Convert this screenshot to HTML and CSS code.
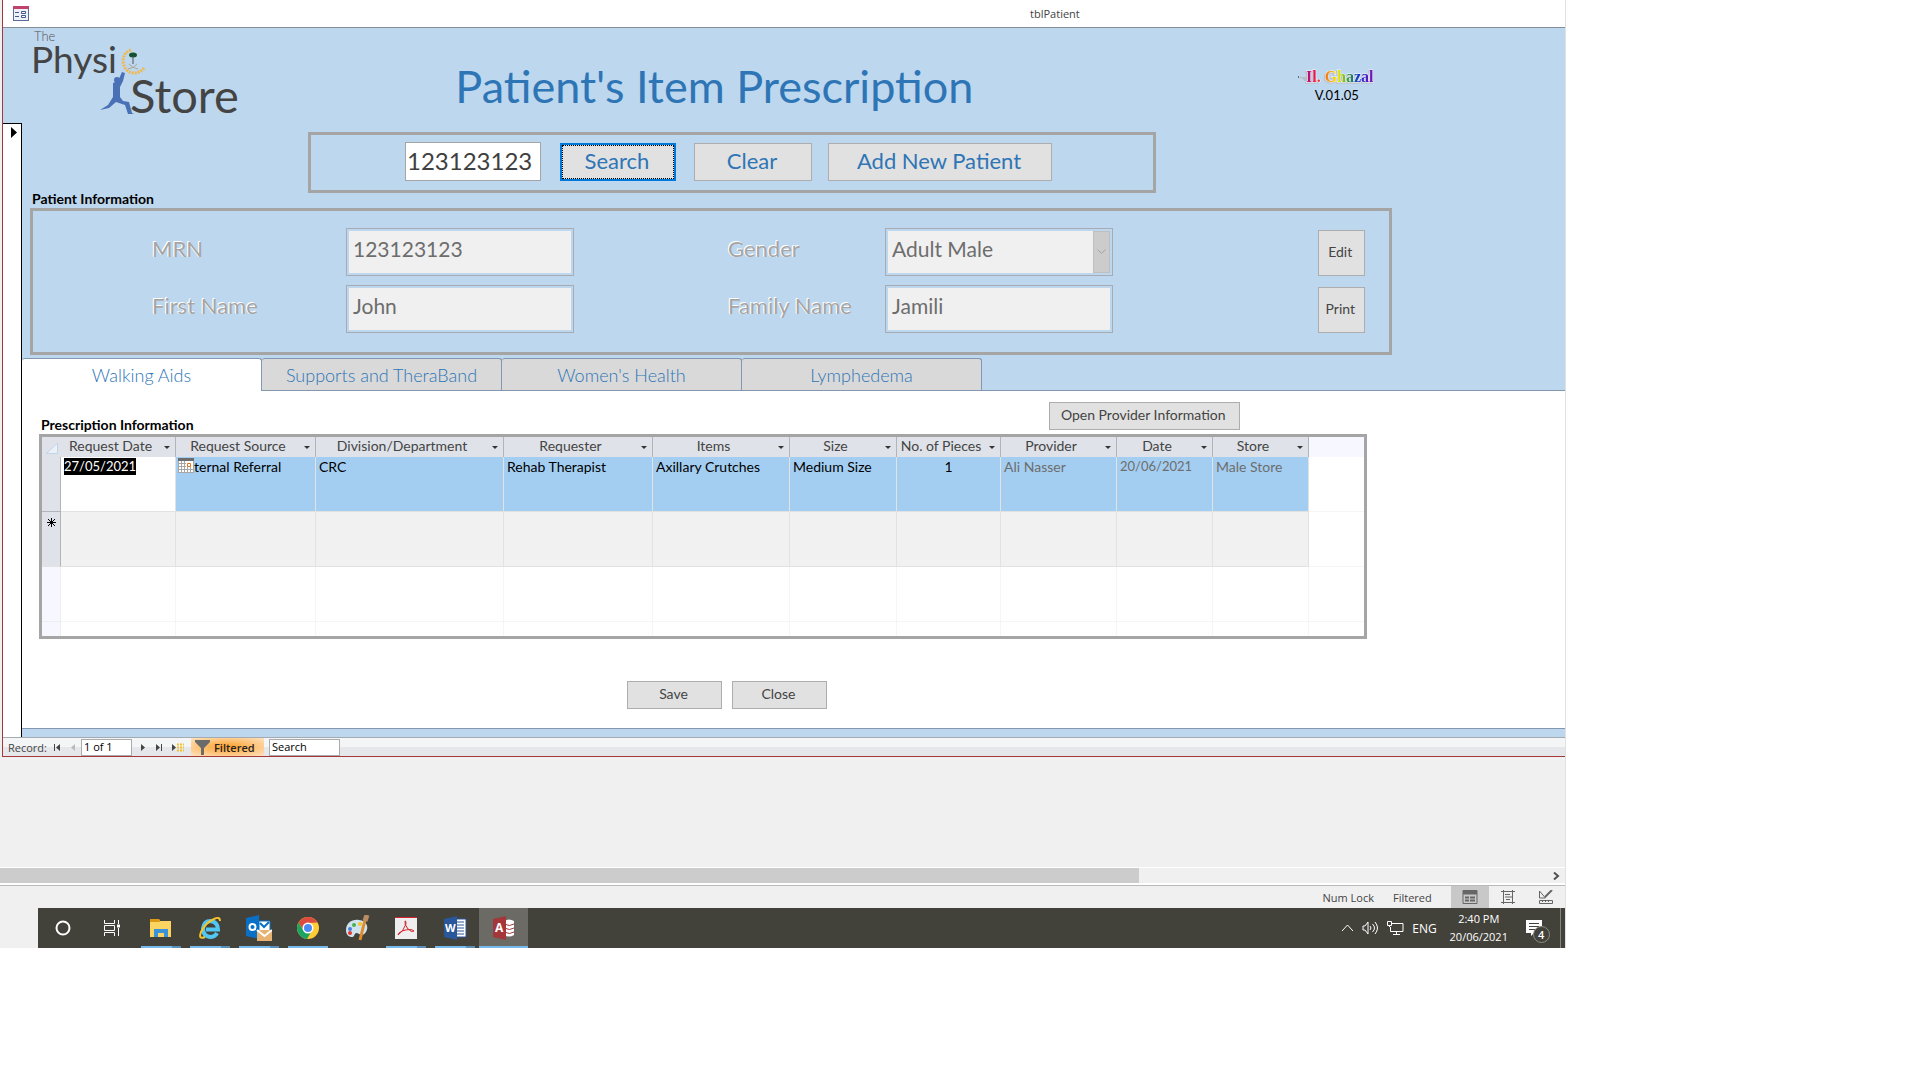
FILE: index.html
```html
<!DOCTYPE html>
<html lang="en">
<head>
    <meta charset="UTF-8">
    <meta name="viewport" content="width=device-width, initial-scale=1.0">
    <title>tblPatient</title>
    <link rel="stylesheet" href="styles.css">
</head>
<body>
<div class="screen">
    <main class="window">
        <header class="titlebar">
            <svg class="form-icon" width="16" height="16" viewBox="0 0 16 16">
                <rect x="0.5" y="0.5" width="15" height="14" fill="#eef1fa" stroke="#5b6a9a"/>
                <rect width="16" height="3" fill="#c2416b"/>
                <path d="M2 6.5h4M2 10.5h4" stroke="#44568c"/>
                <path d="M8.500 5.500h4v2h-4zM8.500 9.500h4v2h-4z" fill="#fff" stroke="#44568c"/>
            </svg>
            <span class="window-title">tblPatient</span>
        </header>

        <div class="form-header">
            <svg class="logo" width="214" height="94" viewBox="30 28 214 94" role="img" aria-label="The Physio Store">
                <text x="34" y="41" font-size="13" font-weight="300" fill="#555">The</text>
                <text x="31" y="73" font-size="37" fill="#444">Physi</text>
                <text x="130" y="113" font-size="47" fill="#444">Store</text>
                <path d="M131 50Q123 53 123 61Q124 72 134 73Q140 73 144 68" fill="none" stroke="#f0b84e" stroke-width="3" stroke-dasharray="2 1"/>
                <ellipse cx="133" cy="55" rx="4" ry="2.500" fill="#14502d"/>
                <path d="M133 56v8" stroke="#555"/>
                <path d="M128 69q6-1 9-5M138 69q-6-1-9-5" fill="none" stroke="#a9aa90"/>
                <circle cx="117" cy="80" r="3" fill="#4a70b5"/>
                <path d="M122 72l3 1-2 8-3 6 0 10 3 4 6 1 3 11 2 1-6 0-3-9-9-3-7 6-9 2 8-5 5-8 0-14 5-2z" fill="#4a70b5"/>
            </svg>
            <h1>Patient's Item Prescription</h1>
            <div class="credits">
                <svg width="80" height="22" viewBox="0 0 80 22" role="img" aria-label="Il. Ghazal">
                    <defs>
                        <linearGradient id="rainbow">
                            <stop offset="0" stop-color="#a0108c"/>
                            <stop offset="0.14" stop-color="#ee1c4e"/>
                            <stop offset="0.3" stop-color="#f47a10"/>
                            <stop offset="0.46" stop-color="#fff000"/>
                            <stop offset="0.62" stop-color="#2f9a3c"/>
                            <stop offset="0.78" stop-color="#1230d8"/>
                            <stop offset="1" stop-color="#8a10b0"/>
                        </linearGradient>
                    </defs>
                    <path d="M1 12h1" stroke="#000"/>
                    <path d="M2 12h8v4h-3l-1-2z" fill="#b9bec4"/>
                    <text class="rainbow" x="9" y="17">Il. Ghazal</text>
                </svg>
                <span>V.01.05</span>
            </div>
        </div>

        <div class="form-body">
            <div class="record-selector">
                <svg width="6" height="11" viewBox="0 0 6 11"><path d="M0 0l6 5.500-6 5.500z"/></svg>
            </div>
            <div class="form-content">
                <form class="panel search-panel">
                    <input class="search-input" type="text" value="123123123" aria-label="MRN to search">
                    <button type="button" class="btn btn-search">Search</button>
                    <button type="button" class="btn btn-clear">Clear</button>
                    <button type="button" class="btn btn-add">Add New Patient</button>
                </form>

                <h2>Patient Information</h2>
                <section class="panel patient-panel">
                    <label for="mrn">MRN</label>
                    <input id="mrn" type="text" value="123123123" disabled>
                    <label for="gender" class="second">Gender</label>
                    <div class="select-wrap">
                        <select id="gender" disabled><option>Adult Male</option></select>
                        <span class="select-arrow">
                            <svg width="9" height="6" viewBox="0 0 9 6"><path d="M0.500 0.500l4 4 4-4" fill="none" stroke="#a3a3a3"/></svg>
                        </span>
                    </div>
                    <button type="button" class="btn btn-side">Edit</button>

                    <label for="first-name">First Name</label>
                    <input id="first-name" type="text" value="John" disabled>
                    <label for="family-name" class="second">Family Name</label>
                    <input id="family-name" type="text" value="Jamili" disabled>
                    <button type="button" class="btn btn-side">Print</button>
                </section>

                <div class="tabs" role="tablist">
                    <button type="button" role="tab" class="tab active" aria-selected="true">Walking Aids</button>
                    <button type="button" role="tab" class="tab">Supports and TheraBand</button>
                    <button type="button" role="tab" class="tab">Women's Health</button>
                    <button type="button" role="tab" class="tab">Lymphedema</button>
                </div>

                <section class="tab-page" role="tabpanel">
                    <div class="page-head">
                        <h2>Prescription Information</h2>
                        <button type="button" class="btn btn-provider">Open Provider Information</button>
                    </div>
                    <div class="panel sheet">
                        <table>
                            <colgroup>
                                <col class="c-select"><col class="c-reqdate"><col class="c-source"><col class="c-division">
                                <col class="c-requester"><col class="c-items"><col class="c-size"><col class="c-pieces">
                                <col class="c-provider"><col class="c-date"><col class="c-store"><col>
                            </colgroup>
                            <thead>
                                <tr>
                                    <th class="corner"><svg width="12" height="11" viewBox="0 0 12 11"><path d="M11.500 0v10.500h-11z" fill="#edf0f5" stroke="#bfd3ea"/></svg></th>
                                    <th>Request Date</th>
                                    <th>Request Source</th>
                                    <th>Division/Department</th>
                                    <th>Requester</th>
                                    <th>Items</th>
                                    <th>Size</th>
                                    <th>No. of Pieces</th>
                                    <th>Provider</th>
                                    <th>Date</th>
                                    <th>Store</th>
                                    <th class="blank"></th>
                                </tr>
                            </thead>
                            <tbody>
                                <tr class="current">
                                    <td class="row-head"></td>
                                    <td class="editing date"><mark>27/05/2021</mark>
                                        <button type="button" class="date-picker" aria-label="Pick a date">
                                            <svg width="16" height="15" viewBox="0 0 16 15">
                                                <path d="M0 0h16v15h-16z" fill="#a6a6a6"/>
                                                <path d="M0 0h16v3h-16z" fill="#6d6d6d"/>
                                                <path d="M1 3h2v2h-2zM4 3h2v2h-2zM7 3h2v2h-2zM1 6h2v2h-2zM4 6h2v2h-2zM7 6h2v2h-2zM1 9h2v2h-2zM4 9h2v2h-2zM7 9h2v2h-2zM10 9h2v2h-2zM13 9h2v2h-2zM1 12h2v2h-2zM4 12h2v2h-2zM7 12h2v2h-2zM10 12h2v2h-2zM13 12h2v2h-2zM8 3h7v6h-7z" fill="#fff"/>
                                                <path d="M9.500 5.500h3v3h-3z" fill="#fff" stroke="#e2731c"/>
                                            </svg>
                                        </button>
                                    </td>
                                    <td>External Referral</td>
                                    <td>CRC</td>
                                    <td>Rehab Therapist</td>
                                    <td>Axillary Crutches</td>
                                    <td>Medium Size</td>
                                    <td class="num">1</td>
                                    <td class="locked">Ali Nasser</td>
                                    <td class="locked date">20/06/2021</td>
                                    <td class="locked">Male Store</td>
                                    <td class="blank"></td>
                                </tr>
                                <tr class="new-row">
                                    <td class="row-head"><svg width="9" height="9" viewBox="0 0 9 9"><path d="M4.500 0v9M0 4.500h9M1 1l7 7M8 1l-7 7" stroke="#000"/></svg></td>
                                    <td></td><td></td><td></td><td></td><td></td><td></td><td></td><td></td><td></td><td></td>
                                    <td class="blank"></td>
                                </tr>
                                <tr class="empty">
                                    <td class="row-head"></td>
                                    <td></td><td></td><td></td><td></td><td></td><td></td><td></td><td></td><td></td><td></td>
                                    <td class="blank"></td>
                                </tr>
                                <tr class="empty last">
                                    <td class="row-head"></td>
                                    <td></td><td></td><td></td><td></td><td></td><td></td><td></td><td></td><td></td><td></td>
                                    <td class="blank"></td>
                                </tr>
                            </tbody>
                        </table>
                    </div>
                    <div class="page-actions">
                        <button type="button" class="btn">Save</button>
                        <button type="button" class="btn">Close</button>
                    </div>
                </section>
            </div>
        </div>

        <nav class="record-nav">
            <span class="record-label">Record:</span>
            <button type="button" aria-label="First record"><svg width="8" height="9" viewBox="0 0 8 9"><path d="M1 1h1v7h-1zM7 1v7l-4-3.500z" fill="#444"/></svg></button>
            <button type="button" aria-label="Previous record"><svg width="8" height="9" viewBox="0 0 8 9"><path d="M6 1v7l-4-3.500z" fill="#bbb"/></svg></button>
            <input class="record-no" type="text" value="1 of 1" aria-label="Current record">
            <button type="button" aria-label="Next record"><svg width="8" height="9" viewBox="0 0 8 9"><path d="M2 1v7l4-3.500z" fill="#444"/></svg></button>
            <button type="button" aria-label="Last record"><svg width="8" height="9" viewBox="0 0 8 9"><path d="M1 1v7l4-3.500zM6 1h1v7h-1z" fill="#444"/></svg></button>
            <button type="button" aria-label="New record"><svg width="14" height="9" viewBox="0 0 14 9"><path d="M1 1v7l4-3.500z" fill="#444"/><path d="M6 1.500h7M6 4.500h7M6 7.500h7" stroke="#efc22c" stroke-width="2" stroke-dasharray="2 1"/></svg></button>
            <button type="button" class="filtered">
                <svg width="15" height="15" viewBox="0 0 15 15"><path d="M0 0h15v2l-6 6v7h-3v-7l-6-6z" fill="#6b6b6b"/></svg>
                Filtered
            </button>
            <input class="record-search" type="text" value="Search" aria-label="Search records">
        </nav>
    </main>

    <div class="workspace"></div>

    <div class="scrollbar">
        <div class="thumb"></div>
        <svg width="7" height="8" viewBox="0 0 7 8"><path d="M1 0.500l4 3.500-4 3.500" fill="none" stroke="#505050" stroke-width="2"/></svg>
    </div>

    <div class="statusbar">
        <span>Num Lock</span>
        <span>Filtered</span>
        <div class="views">
            <button type="button" class="on" aria-label="Form view"><svg width="16" height="14" viewBox="0 0 16 14" fill="none" stroke="#666"><path d="M1 0.500h14v13h-14z"/><path d="M1 2.500h14" stroke-width="4"/><path d="M3 7.500h4M3 10.500h4M8 7.500h5M8 10.500h5" stroke-width="2"/></svg></button>
            <button type="button" aria-label="Layout view"><svg width="14" height="14" viewBox="0 0 14 14" fill="none" stroke="#666"><path d="M0 1.500h14M0 12.500h14M2.500 0v14M11.500 0v14M4 4.500h5M5 9.500h4M4 7h7"/></svg></button>
            <button type="button" aria-label="Design view"><svg width="16" height="15" viewBox="0 0 16 15" fill="none" stroke="#666"><path d="M1.500 1v7h6z"/><path d="M14 0l-7 7" stroke-width="2"/><path d="M1.500 10.500h13v3h-13zM4.500 10v2M7.500 10v2M10.500 10v2"/></svg></button>
        </div>
    </div>

    <footer class="taskbar">
        <div class="apps">
            <button type="button" aria-label="Cortana"><svg width="24" height="24" viewBox="0 0 24 24"><circle cx="12" cy="12" r="6.500" fill="none" stroke="#fff" stroke-width="2"/></svg></button>
            <button type="button" aria-label="Task view"><svg width="24" height="24" viewBox="0 0 24 24" fill="none" stroke="#fff"><path d="M4.500 4v3.500h10V4M4.500 20v-3.500h10V20M4.500 9.500h10v5h-10zM18.500 4v4M18.500 12v8"/><path d="M18.500 8.500v3" stroke-width="3"/></svg></button>
            <button type="button" class="open" aria-label="File Explorer"><svg width="24" height="24" viewBox="0 0 24 24"><path d="M1 3h9l1 2h11v16H1z" fill="#fcd462"/><path d="M1 3h9l1 3H1z" fill="#dd9a12"/><path d="M5 21v-8h14v8h-4v-4H9v4z" fill="#3c92d8"/></svg></button>
            <button type="button" class="open" aria-label="Internet Explorer"><svg width="24" height="24" viewBox="0 0 24 24"><path d="M19 17Q17 21 12 21Q5 20 5 12.500Q6 5 12.500 5Q20 6 20 13.500H8" fill="none" stroke="#53c7f4" stroke-width="4"/><path d="M22 5Q22 0 16 3Q7 7 3 16Q0 24 7 21" fill="none" stroke="#f3c52d" stroke-width="2"/></svg></button>
            <button type="button" class="open" aria-label="Outlook"><svg width="26" height="26" viewBox="0 0 26 26"><path d="M13 6h11v11H13z" fill="#fff" stroke="#0a70c5"/><path d="M14 8l4 4 5-5" fill="none" stroke="#0a70c5" stroke-width="2"/><path d="M0 3l13-3v24l-13-3z" fill="#0a70c5"/><circle cx="6.500" cy="12" r="3" fill="none" stroke="#fff" stroke-width="2"/><path d="M11 15h15v11H11z" fill="#e8b272"/><path d="M11 15l7.500 6 7.500-6" fill="none" stroke="#fff" stroke-width="2"/></svg></button>
            <button type="button" class="open whole" aria-label="Chrome"><svg width="24" height="24" viewBox="0 0 24 24"><circle cx="12" cy="12" r="11" fill="#fc3"/><path d="M2.500 6.500A11 11 0 0 1 21.500 6.500L12 7l-4.500 7z" fill="#dd4b3e"/><path d="M2.500 6.500A11 11 0 0 0 11 23l5-8.500-8.500 0z" fill="#1da462"/><circle cx="12" cy="12" r="5.500" fill="#fff"/><circle cx="12" cy="12" r="4" fill="#4c8bf5"/></svg></button>
            <button type="button" aria-label="Paint"><svg width="26" height="26" viewBox="0 0 26 26"><path d="M2 15C2 8 8 4 15 5C23 6 25 12 22 17C19 22 15 19 13 18C10 17 11 23 7 22C3 21 2 18 2 15z" fill="#cfe2ee"/><circle cx="6" cy="14" r="2" fill="#4a7fe0"/><circle cx="6" cy="18" r="2" fill="#e23b2e"/><circle cx="10" cy="10" r="2" fill="#4caf50"/><circle cx="16" cy="9" r="2" fill="#f3c52d"/><path d="M21 5l-5 20" stroke="#e08a2a" stroke-width="3"/><path d="M23 0l-2 6" stroke="#b98c66" stroke-width="5"/></svg></button>
            <button type="button" class="open" aria-label="Acrobat Reader"><svg width="24" height="24" viewBox="0 0 24 24"><path d="M1 1h22v22H1z" fill="#eee"/><path d="M1 1h22v1H1z" fill="#d3222a"/><path d="M4 19Q9 16 12 8Q12 4 11 5Q10 8 14 13Q18 17 20 15Q17 12 8 15Q4 17 4 19z" fill="none" stroke="#d3222a"/></svg></button>
            <button type="button" class="open" aria-label="Word"><svg width="24" height="24" viewBox="0 0 24 24"><path d="M12 3h11v18H12z" fill="#fff" stroke="#2a569a"/><path d="M14 6h7M14 9h7M14 12h7M14 15h7M14 18h7" stroke="#2a569a"/><path d="M1 3l13-3v24L1 21z" fill="#2a569a"/><text x="2" y="16" font-size="11" font-weight="700" fill="#fff">W</text></svg></button>
            <button type="button" class="open whole current-app" aria-label="Access"><svg width="24" height="24" viewBox="0 0 24 24"><path d="M12 5q5-3 10 0v14q-5 3-10 0z" fill="#fff"/><path d="M12 8q6 3 10 0M12 12q6 3 10 0M12 16q6 3 10 0" fill="none" stroke="#a4373a"/><path d="M1 3l13-3v24L1 21z" fill="#a4373a"/><text x="3" y="16" font-size="12" font-weight="700" fill="#fff">A</text></svg></button>
        </div>
        <div class="tray">
            <svg width="13" height="8" viewBox="0 0 13 8"><path d="M1 7l5.500-6 5.500 6" fill="none" stroke="#fff"/></svg>
            <svg width="17" height="14" viewBox="0 0 17 14" fill="none" stroke="#fff"><path d="M1 5h2l3-4v12l-3-4H1zM8 5q2 2 0 4M10.500 3q4 4 0 8M13 1q5 6 0 12"/></svg>
            <svg width="17" height="14" viewBox="0 0 17 14" fill="none" stroke="#fff"><path d="M5 2.500h11v8H3.500V6M9.500 10v3M6 13.500h7M0.500 0.500h4v4h-4zM2.500 4v2"/></svg>
            <span class="lang">ENG</span>
            <div class="clock"><span>2:40 PM</span><span>20/06/2021</span></div>
            <button type="button" class="notice" aria-label="4 notifications">
                <svg width="16" height="16" viewBox="0 0 16 16"><path d="M0 0h16v13H8l-3 3v-3H0z" fill="#fff"/><path d="M3 3.500h10M3 6.500h10M3 9.500h7" stroke="#42413a"/></svg>
                <span class="badge">4</span>
            </button>
            <span class="show-desktop"></span>
        </div>
    </footer>
</div>
</body>
</html>
```

FILE: styles.css
```css
* {
    box-sizing: border-box;
}

body {
    margin: 0;
    background: #fff;
    font-family: Lato, "Liberation Sans", sans-serif;
    font-size: 14px;
    color: #000;
}

button,
input,
select {
    font: inherit;
    color: inherit;
    margin: 0;
}

svg {
    display: block;
    flex: none;
}

h1,
h2 {
    margin: 0;
}

.screen {
    width: 81.55%;
    border-right: 1px solid #e1e1e1;
    background: #f0f0f0;
}

/* Form window */
.window {
    border-left: 1px solid #a4373a;
    border-bottom: 1px solid #a4373a;
    margin-left: 2px;
    background: #bdd7ee;
}

.titlebar {
    display: flex;
    align-items: center;
    height: 28px;
    padding-left: 10px;
    background: #fff;
    border-bottom: 1px solid #848d98;
    font-family: "Open Sans", sans-serif;
    font-size: 11px;
    color: #444;
}

.window-title {
    margin-left: auto;
    margin-right: 485px;
}

.form-header {
    display: flex;
    align-items: flex-start;
    height: 95px;
    padding: 0 188px 0 27px;
}

.form-header h1 {
    flex: 1;
    padding: 34px 112px 0 0;
    text-align: center;
    font-size: 45px;
    line-height: 48px;
    font-weight: 400;
    color: #2e75b6;
}

.credits {
    display: flex;
    flex-direction: column;
    align-items: center;
    padding-top: 37px;
    font-size: 13px;
    line-height: 16px;
}

.rainbow {
    font-family: "Liberation Serif", serif;
    font-size: 16px;
    font-weight: 700;
    fill: url(#rainbow);
    stroke: #f2f6fa;
    stroke-width: 1px;
    paint-order: stroke;
    filter: drop-shadow(-1px 1px 0 #b9bec4);
}

.form-body {
    display: flex;
}

.record-selector {
    width: 19px;
    padding: 3px 0 0 8px;
    border-top: 1px solid #000;
    border-right: 1px solid #000;
    background: #fff;
}

.form-content {
    flex: 1;
    min-width: 0;
    padding: 9px 0 8px;
}

.panel {
    border: 3px solid #a5a5a5;
}

h2 {
    padding-bottom: 2px;
    font-size: 14px;
    line-height: 14px;
    font-weight: 700;
}

.btn {
    padding: 0 2px 3px 0;
    border: 1px solid #adadad;
    background: #e1e1e1;
    color: #444;
}

/* Search */
.search-panel {
    display: flex;
    align-items: flex-start;
    margin: 0 409px 0 286px;
    padding: 7px 0 9px 94px;
}

.search-panel .btn {
    height: 38px;
    margin-top: 1px;
    font-size: 22px;
    color: #2e75b6;
}

.search-input {
    width: 136px;
    height: 39px;
    padding: 0 2px 3px 1px;
    border: 1px solid #a5a5a5;
    background: #fff;
    font-size: 24px;
    color: #404040;
}

.search-panel .btn-search {
    width: 116px;
    margin-left: 19px;
    border: 2px solid #0078d7;
    outline: 1px dotted #000;
    outline-offset: -3px;
}

.search-panel .btn-clear {
    width: 118px;
    margin-left: 18px;
}

.search-panel .btn-add {
    width: 224px;
    margin-left: 16px;
}

.form-content > h2 {
    margin: -1px 0 0 10px;
}

/* Patient fields */
.patient-panel {
    display: grid;
    grid-template-columns: 194px 228px 311px 228px 1fr;
    row-gap: 9px;
    margin: 0 173px 0 8px;
    padding: 17px 24px 19px 119px;
}

.patient-panel label {
    padding-top: 8px;
    font-size: 22px;
    line-height: 26px;
    color: #a5a5a5;
    text-shadow: -1px -1px 0 #fff, -1px 0 0 #fff;
}

.patient-panel label.second {
    padding-left: 154px;
}

.patient-panel input,
.patient-panel select {
    width: 100%;
    height: 48px;
    padding: 0 6px 7px;
    border: 1px solid #a9abb2;
    border-radius: 0;
    box-shadow: inset 0 0 0 2px #bdd7ee;
    background: #f0f0f0;
    font-size: 21px;
    color: #6d6d6d;
    opacity: 1;
    appearance: none;
}

.select-wrap {
    position: relative;
}

.select-arrow {
    position: absolute;
    top: 3px;
    right: 3px;
    bottom: 3px;
    display: flex;
    align-items: center;
    justify-content: center;
    width: 17px;
    border: 1px solid #bfbfbf;
    background: #ccc;
}

.btn-side {
    justify-self: end;
    width: 47px;
    margin-top: 2px;
}

/* Tabs */
.tabs {
    display: flex;
    margin-top: 3px;
    border-bottom: 1px solid #8497b0;
}

.tab {
    width: 240px;
    height: 32px;
    padding: 0;
    border: 1px solid #8497b0;
    border-left-width: 0;
    border-bottom: 0;
    border-radius: 3px 3px 0 0;
    background: #d9d9d9;
    font-size: 18px;
    font-weight: 300;
    color: #2e75b6;
}

.tab.active {
    height: 33px;
    margin-bottom: -1px;
    background: #fff;
}

.tab-page {
    padding: 11px 198px 19px 17px;
    border-bottom: 1px solid #8497b0;
    background: #fff;
}

.page-head {
    display: flex;
    justify-content: space-between;
    align-items: flex-end;
    padding: 0 127px 0 2px;
}

.btn-provider {
    width: 191px;
    height: 28px;
    margin-bottom: 4px;
}

/* Datasheet */
.sheet {
    background: #fff;
}

table {
    width: 100%;
    table-layout: fixed;
    border-collapse: separate;
    border-spacing: 0;
}

.c-select { width: 19px; }
.c-reqdate { width: 115px; }
.c-source { width: 140px; }
.c-division { width: 188px; }
.c-requester { width: 149px; }
.c-items { width: 137px; }
.c-size { width: 107px; }
.c-pieces { width: 104px; }
.c-provider { width: 116px; }
.c-date,
.c-store { width: 96px; }

th {
    position: relative;
    height: 20px;
    padding: 0 15px 2px 0;
    border-right: 1px solid #b1b5ba;
    background: #dfe2e8;
    font-weight: 400;
    line-height: 18px;
    color: #444;
    white-space: nowrap;
}

th::after {
    content: "";
    position: absolute;
    top: 9px;
    right: 5px;
    border: 3px solid transparent;
    border-top-color: #333;
    border-bottom: 0;
}

th.corner {
    padding: 2px 0 0 4px;
    border-right-color: #dfe2e8;
}

th.blank {
    border: 0;
    background: #f6f7ff;
}

th.corner::after,
th.blank::after {
    display: none;
}

td {
    height: 55px;
    padding: 1px 3px;
    border-right: 1px solid #e2e2e2;
    border-bottom: 1px solid #e2e2e2;
    line-height: 17px;
    vertical-align: top;
    white-space: nowrap;
}

.current td {
    background: #a4cef1;
}

.current td.editing {
    position: relative;
    background: #fff;
}

td.date {
    font-size: 13px;
}

mark {
    display: inline-block;
    background: #000;
    color: #fff;
}

.date-picker {
    position: absolute;
    top: 1px;
    left: 117px;
    z-index: 1;
    padding: 0;
    border: 0;
    background: none;
}

td.num {
    text-align: center;
}

td.locked {
    color: #6d6d6d;
}

.new-row td {
    background: #f1f1f1;
}

.empty td {
    border-color: #f5f5f5;
}

tr td.row-head {
    padding: 6px 0 0 5px;
    border-color: #b1b5ba;
    background: #dfe2e8;
}

.new-row td.row-head {
    border-bottom-color: #e2e2e2;
}

.empty td.row-head {
    border-color: #eee;
    background: #f6f7ff;
}

tr td.blank {
    border-right: 0;
    border-color: #f5f5f5;
    background: #fff;
}

.last td,
.last td.row-head {
    height: 14px;
    padding: 0;
    border-bottom: 0;
}

.page-actions {
    display: flex;
    gap: 10px;
    padding: 42px 0 0 588px;
}

.page-actions .btn {
    width: 95px;
    height: 28px;
}

/* Record navigation */
.record-nav {
    display: flex;
    align-items: center;
    height: 19px;
    padding-left: 5px;
    border-top: 1px solid #a5a9b0;
    background: linear-gradient(#f4f5f7 50%, #e6e7ea 50%);
    font-family: "Open Sans", sans-serif;
    font-size: 11px;
    color: #444;
}

.record-nav button {
    padding: 0 4px;
    border: 0;
    background: none;
}

.record-label {
    width: 41px;
}

.record-nav input {
    height: 17px;
    padding: 0 2px 1px;
    border: 1px solid #ababab;
    background: #fff;
    color: #000;
}

.record-nav .record-no {
    width: 51px;
    margin-right: 3px;
}

.record-nav .filtered {
    display: flex;
    align-items: center;
    gap: 4px;
    width: 73px;
    height: 18px;
    margin-left: 2px;
    background: radial-gradient(#ffa638 10%, #fde3c0);
    font-weight: 600;
    color: #222;
}

.record-nav .record-search {
    width: 71px;
    margin-left: 5px;
}

.workspace {
    height: 110px;
}

.scrollbar {
    display: flex;
    align-items: center;
    justify-content: space-between;
    height: 18px;
    padding-right: 5px;
    border-top: 1px solid #fff;
    border-bottom: 2px solid #fff;
}

.thumb {
    width: 73%;
    height: 15px;
    background: #ccc;
}

/* Status bar */
.statusbar {
    display: flex;
    align-items: center;
    justify-content: flex-end;
    gap: 19px;
    height: 23px;
    border-top: 1px solid #bababa;
    font-family: "Open Sans", sans-serif;
    font-size: 11px;
    color: #444;
}

.views {
    display: flex;
    height: 100%;
}

.views button {
    display: flex;
    align-items: center;
    justify-content: center;
    width: 38px;
    padding: 0;
    border: 0;
    background: none;
}

.views .on {
    background: #c8c8c8;
}

/* Taskbar */
.taskbar {
    display: flex;
    justify-content: space-between;
    height: 40px;
    border-left: 38px solid #f0f0f0;
    background: #42413a;
    font-family: "Open Sans", sans-serif;
    color: #fff;
}

.apps {
    display: flex;
}

.apps button {
    display: flex;
    align-items: center;
    justify-content: center;
    width: 49px;
    padding: 0;
    border: 0;
    background: none;
}

.apps .open {
    background: linear-gradient(90deg, #76b9ed 31px, #5a8fb8 31px) 5px 100% / 40px 2px no-repeat;
}

.apps .whole {
    background: linear-gradient(#76b9ed, #76b9ed) 5px 100% / 40px 2px no-repeat;
}

.apps .current-app {
    background: linear-gradient(#76b9ed, #76b9ed) 0 100% / 100% 2px no-repeat #6b6a64;
}

.tray {
    display: flex;
    align-items: center;
    gap: 8px;
}

.lang {
    font-size: 12px;
}

.clock {
    display: flex;
    flex-direction: column;
    align-items: center;
    width: 68px;
    font-size: 11px;
    line-height: 18px;
}

.notice {
    position: relative;
    margin: 0 10px 0 5px;
    padding: 0;
    border: 0;
    background: none;
}

.badge {
    position: absolute;
    top: 6px;
    left: 7px;
    width: 17px;
    height: 17px;
    border: 1px solid #8c8c86;
    border-radius: 50%;
    background: #42413a;
    font-size: 11px;
    font-weight: 600;
    line-height: 15px;
}

.show-desktop {
    align-self: stretch;
    width: 5px;
    border-left: 1px solid #86857f;
}
```
